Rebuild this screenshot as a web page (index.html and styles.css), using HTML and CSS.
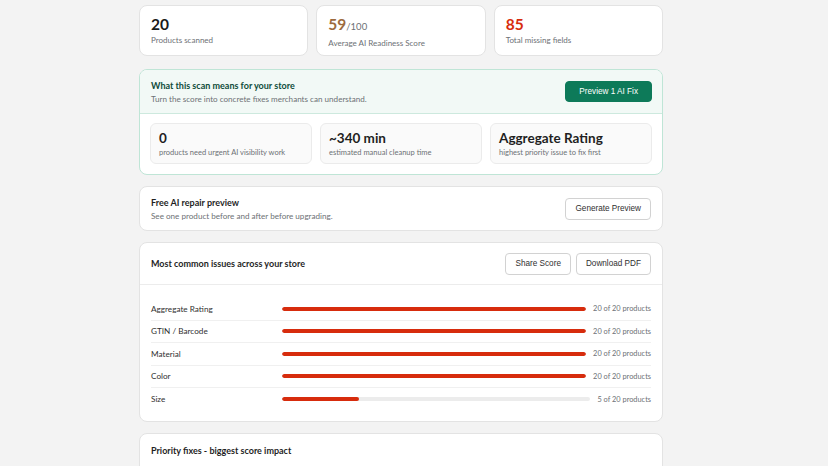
FILE: index.html
```html
<!DOCTYPE html>
<html lang="en">
<head>
<meta charset="utf-8">
<title>AI Readiness Scan</title>
<link rel="stylesheet" href="styles.css">
</head>
<body>
<div class="page">
  <div class="stats">
    <div class="card stat">
      <div class="stat-num">20</div>
      <div class="stat-label">Products scanned</div>
    </div>
    <div class="card stat">
      <div class="stat-num score">59<span class="of">/100</span></div>
      <div class="stat-label">Average AI Readiness Score</div>
    </div>
    <div class="card stat">
      <div class="stat-num missing">85</div>
      <div class="stat-label">Total missing fields</div>
    </div>
  </div>

  <div class="meaning">
    <div class="meaning-head">
      <div>
        <div class="meaning-title">What this scan means for your store</div>
        <div class="sub">Turn the score into concrete fixes merchants can understand.</div>
      </div>
      <button class="btn btn-primary">Preview 1 AI Fix</button>
    </div>
    <div class="meaning-grid">
      <div class="cell">
        <div class="cell-num">0</div>
        <div class="cell-label">products need urgent AI visibility work</div>
      </div>
      <div class="cell">
        <div class="cell-num">~340 min</div>
        <div class="cell-label">estimated manual cleanup time</div>
      </div>
      <div class="cell">
        <div class="cell-num">Aggregate Rating</div>
        <div class="cell-label">highest priority issue to fix first</div>
      </div>
    </div>
  </div>

  <div class="card panel preview">
    <div>
      <div class="title">Free AI repair preview</div>
      <div class="sub">See one product before and after before upgrading.</div>
    </div>
    <button class="btn">Generate Preview</button>
  </div>

  <div class="card issues">
    <div class="issues-head">
      <div class="title">Most common issues across your store</div>
      <div class="actions">
        <button class="btn">Share Score</button>
        <button class="btn">Download PDF</button>
      </div>
    </div>
    <div class="rows">
      <div class="row">
        <div class="row-name">Aggregate Rating</div>
        <div class="track"><div class="fill" style="width:100%"></div></div>
        <div class="row-count">20 of 20 products</div>
      </div>
      <div class="row">
        <div class="row-name">GTIN / Barcode</div>
        <div class="track"><div class="fill" style="width:100%"></div></div>
        <div class="row-count">20 of 20 products</div>
      </div>
      <div class="row">
        <div class="row-name">Material</div>
        <div class="track"><div class="fill" style="width:100%"></div></div>
        <div class="row-count">20 of 20 products</div>
      </div>
      <div class="row">
        <div class="row-name">Color</div>
        <div class="track"><div class="fill" style="width:100%"></div></div>
        <div class="row-count">20 of 20 products</div>
      </div>
      <div class="row">
        <div class="row-name">Size</div>
        <div class="track"><div class="fill" style="width:25%"></div></div>
        <div class="row-count">5 of 20 products</div>
      </div>
    </div>
  </div>

  <div class="card panel priority">
    <div class="title">Priority fixes - biggest score impact</div>
  </div>
</div>
</body>
</html>
```

FILE: styles.css
```css
* { box-sizing: border-box; }
html, body { margin: 0; padding: 0; }
body {
  background: #f3f3f3;
  font-family: "Lato", "Segoe UI", "Liberation Sans", sans-serif;
  color: #202223;
}
.page {
  width: 524px;
  margin-left: 139px;
  padding-top: 5px;
  padding-bottom: 40px;
}
.card {
  background: #fff;
  border: 1px solid #e3e3e3;
  border-radius: 8px;
}
.stats {
  display: grid;
  grid-template-columns: repeat(3, 1fr);
  gap: 8px;
}
.stat {
  height: 51px;
  padding: 9px 11px;
}
.stat-num {
  font-size: 15.5px;
  font-weight: 700;
  line-height: 18px;
  color: #1a1a1a;
}
.stat-num.score { color: #9c6a3e; }
.stat-num .of {
  font-size: 9.5px;
  font-weight: 400;
  color: #6d7175;
}
.stat-num.missing { color: #d72c0d; }
.stat-label {
  font-size: 8px;
  line-height: 12px;
  margin-top: 1px;
  color: #6d7175;
}

.meaning {
  margin-top: 13px;
  border: 1px solid #bfe5d6;
  border-radius: 8px;
  background: #fff;
  overflow: hidden;
}
.meaning-head {
  display: flex;
  align-items: center;
  justify-content: space-between;
  height: 44px;
  padding: 0 10px 0 11px;
  background: #f2f9f6;
  border-bottom: 1px solid #cde9de;
}
.meaning-title {
  font-size: 9px;
  font-weight: 700;
  color: #0f4c3a;
  line-height: 13px;
}
.sub {
  font-size: 8.1px;
  line-height: 12px;
  color: #6d7175;
  margin-top: 1px;
}
.btn {
  font-family: "Liberation Sans", Arial, sans-serif;
  font-size: 8.2px;
  color: #303030;
  background: #fff;
  border: 1px solid #d2d2d2;
  border-radius: 4px;
  height: 22px;
  padding: 0 9px;
  cursor: pointer;
}
.btn-primary {
  background: #0d7a59;
  border-color: #0d7a59;
  color: #fff;
  height: 21px;
  padding: 0 13px;
}
.meaning-grid {
  display: grid;
  grid-template-columns: repeat(3, 1fr);
  gap: 8px;
  padding: 9px 10px 10px;
}
.cell {
  height: 41px;
  background: #fafafa;
  border: 1px solid #ebebeb;
  border-radius: 6px;
  padding: 6px 8px;
}
.cell-num {
  font-size: 13.5px;
  font-weight: 700;
  line-height: 17px;
  color: #1f1f1f;
}
.cell-label {
  font-size: 7.5px;
  line-height: 11px;
  color: #6d7175;
}

.panel {
  margin-top: 11px;
  padding: 0 11px;
}
.preview {
  display: flex;
  align-items: center;
  justify-content: space-between;
  height: 45px;
}
.title {
  font-size: 9px;
  font-weight: 700;
  line-height: 13px;
  color: #1f1f1f;
}

.issues {
  margin-top: 11px;
}
.issues-head {
  display: flex;
  align-items: center;
  justify-content: space-between;
  height: 42px;
  padding: 0 11px;
  border-bottom: 1px solid #ececec;
}
.actions {
  display: flex;
  gap: 5px;
}
.rows {
  padding: 13px 11px 10px;
}
.row {
  display: flex;
  align-items: center;
  gap: 7px;
  height: 22.5px;
  border-bottom: 1px solid #f0f0f0;
}
.row:last-child { border-bottom: none; }
.row-name {
  width: 124px;
  flex: none;
  font-size: 8.2px;
  color: #303030;
}
.track {
  flex: 1;
  height: 4px;
  background: #ececec;
  border-radius: 2px;
  overflow: hidden;
}
.fill {
  height: 100%;
  background: #d72c0d;
  border-radius: 2px;
}
.row-count {
  flex: none;
  font-size: 7.4px;
  color: #6d7175;
}
.priority {
  height: 60px;
  padding-top: 10px;
}
```
